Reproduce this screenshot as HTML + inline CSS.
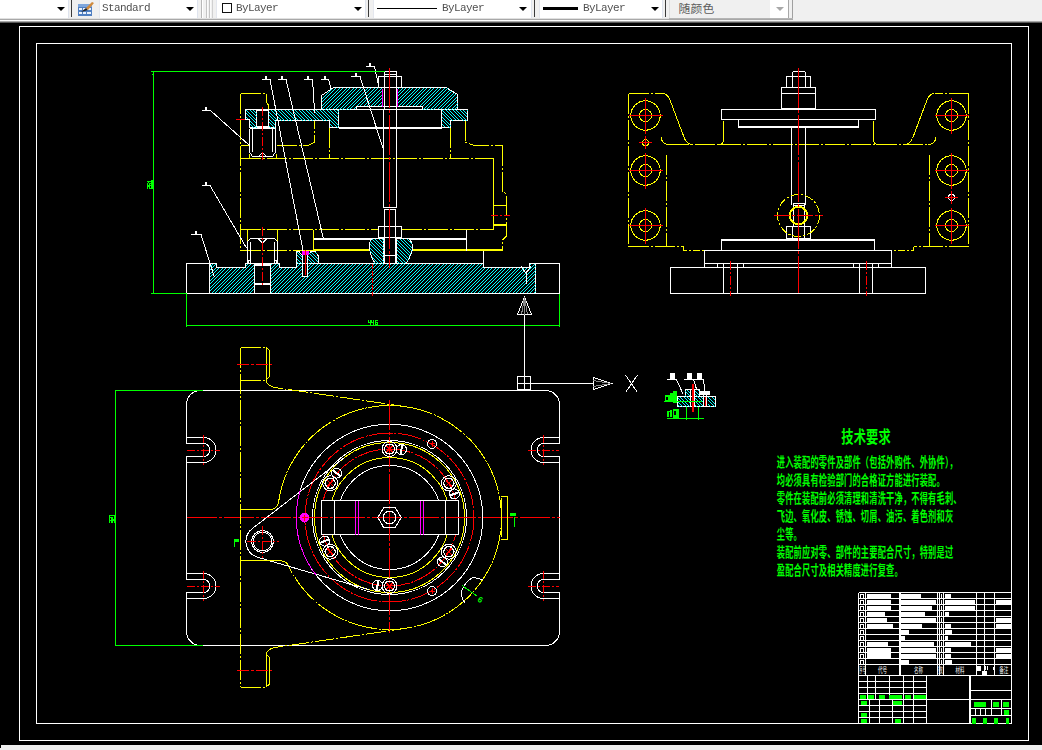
<!DOCTYPE html>
<html><head><meta charset="utf-8"><title>AutoCAD</title>
<style>
html,body{margin:0;padding:0;background:#000;overflow:hidden;}
body{width:1042px;height:750px;position:relative;font-family:"Liberation Sans",sans-serif;}
#cad{position:absolute;left:0;top:0;width:1042px;height:750px;display:block;}

#tb{position:absolute;left:0;top:0;width:1042px;height:23px;background:#f0f0f0;overflow:hidden;}
#tb .g{position:absolute;left:0;top:21px;width:1042px;height:1px;background:#a8a8a8;}
#tb .g2{position:absolute;left:0;top:22px;width:1042px;height:1px;background:#585858;}
#tb .w{position:absolute;top:0;height:18px;background:#fff;}
#tb .ln{position:absolute;top:18px;height:1px;left:0;width:793px;background:#e0e0e0;}
#tb .ln2{position:absolute;top:19px;height:1px;left:0;width:793px;background:#a8a8a8;}
#tb .ln3{position:absolute;top:20px;height:1px;left:0;width:793px;background:#fdfdfd;}
#tb .sep{position:absolute;top:0;height:17px;width:1px;background:#3a3a3a;}
#tb .vl{position:absolute;top:0;height:19px;width:1px;}
#tb .ar{position:absolute;top:7px;width:0;height:0;border-left:4px solid transparent;border-right:4px solid transparent;border-top:4px solid #000;}
#tb .t{position:absolute;top:2px;font-family:"Liberation Mono",monospace;font-size:11px;line-height:13px;letter-spacing:-0.6px;color:#505050;white-space:pre;will-change:transform;}
#bot{position:absolute;left:0;top:745px;width:1042px;height:5px;background:#f0f0f0;}
#bot i{position:absolute;left:0;top:0;width:1px;height:3px;background:#000;}

</style></head><body>
<svg id="cad" width="1042" height="750" viewBox="0 0 1042 750" shape-rendering="crispEdges">
<defs>
<pattern id="hf" patternUnits="userSpaceOnUse" width="7" height="7"><path d="M0 0h1v1h-1zM3 0h1v1h-1zM2 1h1v1h-1zM6 1h1v1h-1zM1 2h1v1h-1zM5 2h1v1h-1zM0 3h1v1h-1zM4 3h1v1h-1zM3 4h1v1h-1zM6 4h1v1h-1zM2 5h1v1h-1zM5 5h1v1h-1zM1 6h1v1h-1zM4 6h1v1h-1z" fill="#00ffff"/></pattern>
<pattern id="hb" patternUnits="userSpaceOnUse" width="7" height="7"><path d="M0 0h1v1h-1zM3 0h1v1h-1zM1 1h1v1h-1zM4 1h1v1h-1zM2 2h1v1h-1zM5 2h1v1h-1zM3 3h1v1h-1zM6 3h1v1h-1zM0 4h1v1h-1zM4 4h1v1h-1zM1 5h1v1h-1zM5 5h1v1h-1zM2 6h1v1h-1zM6 6h1v1h-1z" fill="#00ffff"/></pattern>
</defs>
<rect x="0" y="0" width="1042" height="750" fill="#000"/>
<rect x="19.5" y="26.5" width="1009" height="714" fill="none" stroke="#ffffff" stroke-width="1"/>
<rect x="36.5" y="43.5" width="975" height="680" fill="none" stroke="#ffffff" stroke-width="1"/>
<line x1="240.5" y1="93.5" x2="240.5" y2="250.5" stroke="#ffff00" stroke-width="1" stroke-dasharray="20 2 2 2"/>
<line x1="240.5" y1="93.5" x2="266.5" y2="93.5" stroke="#ffff00" stroke-width="1" stroke-dasharray="20 2 2 2"/>
<polyline points="266.5,93.5 266.5,102.5 268.5,105 268.5,109.5" fill="none" stroke="#ffff00" stroke-width="1"/>
<line x1="240.5" y1="145.5" x2="249.5" y2="145.5" stroke="#ffff00" stroke-width="1"/>
<polyline points="276.5,145.5 307.5,145.5 314.5,142.5 314.5,120.5" fill="none" stroke="#ffff00" stroke-width="1" stroke-dasharray="20 2 2 2"/>
<line x1="240.5" y1="158.5" x2="493.5" y2="158.5" stroke="#ffff00" stroke-width="1" stroke-dasharray="20 2 2 2"/>
<line x1="249.5" y1="154" x2="249.5" y2="158.5" stroke="#ffff00" stroke-width="1"/>
<line x1="276.5" y1="154" x2="276.5" y2="158.5" stroke="#ffff00" stroke-width="1"/>
<line x1="329.5" y1="127.5" x2="329.5" y2="158.5" stroke="#ffff00" stroke-width="1" stroke-dasharray="20 2 2 2"/>
<line x1="450.5" y1="127.5" x2="450.5" y2="158.5" stroke="#ffff00" stroke-width="1" stroke-dasharray="20 2 2 2"/>
<polyline points="465.5,120.5 465.5,142.5 475,145.5 502.5,145.5" fill="none" stroke="#ffff00" stroke-width="1" stroke-dasharray="20 2 2 2"/>
<polyline points="502.5,145.5 502.5,191 506.5,194.5 506.5,236 502.5,240 502.5,250.5" fill="none" stroke="#ffff00" stroke-width="1" stroke-dasharray="20 2 2 2"/>
<line x1="493.5" y1="158.5" x2="493.5" y2="229.5" stroke="#ffff00" stroke-width="1"/>
<line x1="240.5" y1="229.5" x2="378.5" y2="229.5" stroke="#ffff00" stroke-width="1" stroke-dasharray="20 2 2 2"/>
<line x1="401.5" y1="229.5" x2="493.5" y2="229.5" stroke="#ffff00" stroke-width="1" stroke-dasharray="20 2 2 2"/>
<line x1="240.5" y1="250.5" x2="313.5" y2="250.5" stroke="#ffff00" stroke-width="1" stroke-dasharray="20 2 2 2"/>
<line x1="313.5" y1="250" x2="370" y2="250" stroke="#ffff00" stroke-width="2"/>
<line x1="412" y1="250" x2="502.5" y2="250" stroke="#ffff00" stroke-width="2"/>
<line x1="247.5" y1="229.5" x2="247.5" y2="240.5" stroke="#ffff00" stroke-width="1"/>
<line x1="277.5" y1="229.5" x2="277.5" y2="240.5" stroke="#ffff00" stroke-width="1"/>
<line x1="313.5" y1="229.5" x2="313.5" y2="250.5" stroke="#ffff00" stroke-width="1"/>
<line x1="493.5" y1="205.5" x2="506.5" y2="205.5" stroke="#ffff00" stroke-width="1"/>
<line x1="493.5" y1="224.5" x2="506.5" y2="224.5" stroke="#ffff00" stroke-width="2"/>
<line x1="491" y1="215.5" x2="510" y2="215.5" stroke="#ff0000" stroke-width="1" stroke-dasharray="7 2 2 2"/>
<line x1="236" y1="119.5" x2="245.5" y2="119.5" stroke="#ff0000" stroke-width="1"/>
<rect x="186.5" y="263.5" width="23" height="30" fill="none" stroke="#ffffff" stroke-width="1"/>
<rect x="535.5" y="263.5" width="24" height="30" fill="none" stroke="#ffffff" stroke-width="1"/>
<polygon points="209.5,293.5 209.5,263.5 216,263.5 216,267.5 245.5,267.5 245.5,263.5 279.5,263.5 279.5,267.5 296.5,267.5 296.5,263.5 483.5,263.5 483.5,267.5 529.5,267.5 529.5,263.5 535.5,263.5 535.5,293.5" fill="none" stroke="#ffffff" stroke-width="1"/>
<path d="M209.5 293.5 L209.5 263.5 L216 263.5 L216 267.5 L245.5 267.5 L245.5 263.5 L279.5 263.5 L279.5 267.5 L296.5 267.5 L296.5 263.5 L483.5 263.5 L483.5 267.5 L529.5 267.5 L529.5 263.5 L535.5 263.5 L535.5 293.5Z M254.5 263.5 L270.5 263.5 L270.5 293.5 L254.5 293.5Z M302.5 263.5 L308 263.5 L308 276.5 L302.5 276.5Z" fill="url(#hf)" fill-rule="evenodd" stroke="none"/>
<polygon points="209.5,293.5 209.5,263.5 216,263.5 216,267.5 245.5,267.5 245.5,263.5 279.5,263.5 279.5,267.5 296.5,267.5 296.5,263.5 483.5,263.5 483.5,267.5 529.5,267.5 529.5,263.5 535.5,263.5 535.5,293.5" fill="none" stroke="#ffffff" stroke-width="1" stroke-dasharray="1 2"/>
<polygon points="296.5,263.5 296.5,251.5 299,251.5 301,254 309,254 311,251.5 315,251.5 318,255.5 318,263.5" fill="none" stroke="#ffffff" stroke-width="1"/>
<path d="M296.5 263.5 L296.5 251.5 L299 251.5 L301 254 L309 254 L311 251.5 L315 251.5 L318 255.5 L318 263.5Z M302.5 254 L308 254 L308 263.5 L302.5 263.5Z" fill="url(#hb)" fill-rule="evenodd" stroke="none"/>
<polygon points="296.5,263.5 296.5,251.5 299,251.5 301,254 309,254 311,251.5 315,251.5 318,255.5 318,263.5" fill="none" stroke="#ffffff" stroke-width="1" stroke-dasharray="1 2"/>
<line x1="254.5" y1="263.5" x2="254.5" y2="293.5" stroke="#ffffff" stroke-width="1"/>
<line x1="270.5" y1="263.5" x2="270.5" y2="293.5" stroke="#ffffff" stroke-width="1"/>
<line x1="254.5" y1="264.5" x2="270.5" y2="264.5" stroke="#ffffff" stroke-width="2"/>
<line x1="254.5" y1="284" x2="270.5" y2="284" stroke="#ffffff" stroke-width="2"/>
<line x1="186.5" y1="293.5" x2="559.5" y2="293.5" stroke="#ffffff" stroke-width="1"/>
<rect x="302.5" y="254.5" width="5" height="22" fill="none" stroke="#ffffff" stroke-width="1"/>
<rect x="301.5" y="251" width="7" height="4" fill="#ff00ff"/>
<line x1="305.5" y1="250" x2="305.5" y2="275" stroke="#ff0000" stroke-width="1"/>
<polyline points="521,266.5 526,273 531,266.5" fill="none" stroke="#ffffff" stroke-width="1"/>
<line x1="526" y1="273" x2="526" y2="284" stroke="#ffffff" stroke-width="1"/>
<line x1="483.5" y1="250.5" x2="483.5" y2="267.5" stroke="#ffffff" stroke-width="1"/>
<path d="M371.5 238.5 L383.5 238.5 L383.5 263.5 L375 263.5 Q369.5 254 369.5 247 Q369.5 242 371.5 238.5Z" fill="none" stroke="#ffffff" stroke-width="1"/>
<path d="M396.5 238.5 L409.5 238.5 Q412.5 243 412.5 247 Q412.5 254 406 263.5 L396.5 263.5Z" fill="none" stroke="#ffffff" stroke-width="1"/>
<path d="M371.5 238.5 L383.5 238.5 L383.5 263.5 L375 263.5 Q369.5 254 369.5 247 Q369.5 242 371.5 238.5Z" fill="url(#hb)" fill-rule="evenodd" stroke="none"/>
<path d="M396.5 238.5 L409.5 238.5 Q412.5 243 412.5 247 Q412.5 254 406 263.5 L396.5 263.5Z" fill="url(#hb)" fill-rule="evenodd" stroke="none"/>
<line x1="313.5" y1="239" x2="371" y2="239" stroke="#ffffff" stroke-width="2"/>
<line x1="410" y1="239" x2="466.5" y2="239" stroke="#ffffff" stroke-width="2"/>
<line x1="466.5" y1="229.5" x2="466.5" y2="250.5" stroke="#ffffff" stroke-width="1"/>
<polyline points="247.5,263.5 247.5,241.5 250.5,238.5 274.5,238.5 277.5,241.5 277.5,263.5" fill="none" stroke="#ffffff" stroke-width="1"/>
<line x1="250.5" y1="241.5" x2="250.5" y2="263" stroke="#ffffff" stroke-width="1"/>
<line x1="274.5" y1="241.5" x2="274.5" y2="263" stroke="#ffffff" stroke-width="1"/>
<polyline points="258,238.5 262.5,243 267,238.5" fill="none" stroke="#ffffff" stroke-width="1"/>
<circle cx="249.5" cy="262" r="1.5" fill="none" stroke="#ffffff" stroke-width="1"/>
<circle cx="275.5" cy="262" r="1.5" fill="none" stroke="#ffffff" stroke-width="1"/>
<line x1="262.5" y1="227" x2="262.5" y2="287" stroke="#ff0000" stroke-width="1" stroke-dasharray="9 2 2 2"/>
<polygon points="245.5,109.5 256.5,109.5 256.5,127.5 249.5,127.5 249.5,119.5 245.5,119.5" fill="none" stroke="#ffffff" stroke-width="1"/>
<path d="M245.5 109.5 L256.5 109.5 L256.5 127.5 L249.5 127.5 L249.5 119.5 L245.5 119.5Z" fill="url(#hb)" fill-rule="evenodd" stroke="none"/>
<polygon points="245.5,109.5 256.5,109.5 256.5,127.5 249.5,127.5 249.5,119.5 245.5,119.5" fill="none" stroke="#ffffff" stroke-width="1" stroke-dasharray="1 2"/>
<polygon points="268.5,109.5 338.5,109.5 338.5,127.5 329.5,127.5 329.5,120.5 275.5,120.5 275.5,127.5 268.5,127.5" fill="none" stroke="#ffffff" stroke-width="1"/>
<path d="M268.5 109.5 L338.5 109.5 L338.5 127.5 L329.5 127.5 L329.5 120.5 L275.5 120.5 L275.5 127.5 L268.5 127.5Z" fill="url(#hb)" fill-rule="evenodd" stroke="none"/>
<polygon points="268.5,109.5 338.5,109.5 338.5,127.5 329.5,127.5 329.5,120.5 275.5,120.5 275.5,127.5 268.5,127.5" fill="none" stroke="#ffffff" stroke-width="1" stroke-dasharray="1 2"/>
<polygon points="441.5,109.5 467.5,109.5 467.5,120.5 450.5,120.5 450.5,127.5 441.5,127.5" fill="none" stroke="#ffffff" stroke-width="1"/>
<path d="M441.5 109.5 L467.5 109.5 L467.5 120.5 L450.5 120.5 L450.5 127.5 L441.5 127.5Z" fill="url(#hb)" fill-rule="evenodd" stroke="none"/>
<polygon points="441.5,109.5 467.5,109.5 467.5,120.5 450.5,120.5 450.5,127.5 441.5,127.5" fill="none" stroke="#ffffff" stroke-width="1" stroke-dasharray="1 2"/>
<line x1="256.5" y1="110" x2="268.5" y2="110" stroke="#ffffff" stroke-width="2"/>
<line x1="256.5" y1="126.5" x2="268.5" y2="126.5" stroke="#ffffff" stroke-width="2"/>
<line x1="338.5" y1="109.5" x2="441.5" y2="109.5" stroke="#ffffff" stroke-width="1"/>
<line x1="338.5" y1="127.5" x2="441.5" y2="127.5" stroke="#ffffff" stroke-width="2"/>
<polyline points="249.5,128.5 249.5,152 252.5,156.5 272.5,156.5 275.5,152 275.5,128.5" fill="none" stroke="#ffffff" stroke-width="1"/>
<line x1="252.5" y1="129" x2="252.5" y2="152" stroke="#ffffff" stroke-width="1"/>
<line x1="272.5" y1="129" x2="272.5" y2="152" stroke="#ffffff" stroke-width="1"/>
<line x1="249.5" y1="128.5" x2="275.5" y2="128.5" stroke="#ffffff" stroke-width="1"/>
<polyline points="258.5,156.5 262.5,152.5 266.5,156.5" fill="none" stroke="#ffffff" stroke-width="1"/>
<line x1="262.5" y1="107" x2="262.5" y2="160" stroke="#ff0000" stroke-width="1" stroke-dasharray="9 2 2 2"/>
<polygon points="321.5,109.5 321.5,95.5 333.5,87.5 446,87.5 457.5,94.5 457.5,109.5 422.5,109.5 422.5,106.5 356.5,106.5 356.5,109.5" fill="none" stroke="#ffffff" stroke-width="1"/>
<path d="M321.5 109.5 L321.5 95.5 L333.5 87.5 L446 87.5 L457.5 94.5 L457.5 109.5 L422.5 109.5 L422.5 106.5 L356.5 106.5 L356.5 109.5Z M383 87.5 L398 87.5 L398 106.5 L383 106.5Z" fill="url(#hf)" fill-rule="evenodd" stroke="none"/>
<polygon points="321.5,109.5 321.5,95.5 333.5,87.5 446,87.5 457.5,94.5 457.5,109.5 422.5,109.5 422.5,106.5 356.5,106.5 356.5,109.5" fill="none" stroke="#ffffff" stroke-width="1" stroke-dasharray="1 2"/>
<line x1="356.5" y1="106.5" x2="422.5" y2="106.5" stroke="#ffffff" stroke-width="1"/>
<line x1="382.5" y1="88.5" x2="382.5" y2="106.5" stroke="#ff00ff" stroke-width="1"/>
<line x1="397.5" y1="88.5" x2="397.5" y2="106.5" stroke="#ff00ff" stroke-width="1"/>
<line x1="384.5" y1="71.5" x2="384.5" y2="109.5" stroke="#ffffff" stroke-width="1"/>
<line x1="383.5" y1="109.5" x2="383.5" y2="207.5" stroke="#ffffff" stroke-width="1"/>
<line x1="396.5" y1="71.5" x2="396.5" y2="207.5" stroke="#ffffff" stroke-width="1"/>
<line x1="384.5" y1="71.5" x2="396.5" y2="71.5" stroke="#ffffff" stroke-width="1"/>
<line x1="384.5" y1="74.5" x2="396.5" y2="74.5" stroke="#ffffff" stroke-width="1"/>
<line x1="383.5" y1="207.5" x2="397" y2="207.5" stroke="#ffffff" stroke-width="1"/>
<line x1="384.5" y1="209" x2="384.5" y2="263.5" stroke="#ffffff" stroke-width="1"/>
<line x1="395.5" y1="209" x2="395.5" y2="263.5" stroke="#ffffff" stroke-width="1"/>
<line x1="384.5" y1="209" x2="395.5" y2="209" stroke="#ffffff" stroke-width="1"/>
<line x1="384.5" y1="255.5" x2="395.5" y2="255.5" stroke="#ffffff" stroke-width="1"/>
<rect x="378.5" y="226.5" width="23" height="11" fill="none" stroke="#ffffff" stroke-width="1"/>
<line x1="384.5" y1="226.5" x2="384.5" y2="237.5" stroke="#ffffff" stroke-width="1"/>
<line x1="395.5" y1="226.5" x2="395.5" y2="237.5" stroke="#ffffff" stroke-width="1"/>
<rect x="378.5" y="76.5" width="23" height="11" fill="none" stroke="#ffffff" stroke-width="1"/>
<line x1="389.5" y1="68" x2="389.5" y2="268" stroke="#ff0000" stroke-width="1" stroke-dasharray="40 2 3 2"/>
<line x1="372.5" y1="263.5" x2="372.5" y2="296" stroke="#ff0000" stroke-width="1" stroke-dasharray="5 2"/>
<line x1="262" y1="79.5" x2="270" y2="79.5" stroke="#ffffff" stroke-width="1"/>
<line x1="270" y1="79.5" x2="303" y2="250.5" stroke="#ffffff" stroke-width="1"/>
<rect x="265" y="75.5" width="2" height="3.5" fill="#ffffff"/>
<line x1="278" y1="79.5" x2="286" y2="79.5" stroke="#ffffff" stroke-width="1"/>
<line x1="286" y1="79.5" x2="323.5" y2="239" stroke="#ffffff" stroke-width="1"/>
<rect x="281" y="75.5" width="2" height="3.5" fill="#ffffff"/>
<line x1="304" y1="79.5" x2="312.5" y2="79.5" stroke="#ffffff" stroke-width="1"/>
<line x1="312.5" y1="79.5" x2="314.7" y2="113" stroke="#ffffff" stroke-width="1"/>
<rect x="307.25" y="75.5" width="2" height="3.5" fill="#ffffff"/>
<line x1="320.5" y1="79.5" x2="328.5" y2="79.5" stroke="#ffffff" stroke-width="1"/>
<line x1="328.5" y1="79.5" x2="331" y2="88.5" stroke="#ffffff" stroke-width="1"/>
<rect x="323.5" y="75.5" width="2" height="3.5" fill="#ffffff"/>
<line x1="351" y1="76.5" x2="360" y2="76.5" stroke="#ffffff" stroke-width="1"/>
<line x1="360" y1="76.5" x2="382.7" y2="147.5" stroke="#ffffff" stroke-width="1"/>
<rect x="354.5" y="72.5" width="2" height="3.5" fill="#ffffff"/>
<line x1="366" y1="66.5" x2="374.5" y2="66.5" stroke="#ffffff" stroke-width="1"/>
<line x1="374.5" y1="66.5" x2="378.5" y2="85.5" stroke="#ffffff" stroke-width="1"/>
<rect x="369.25" y="62.5" width="2" height="3.5" fill="#ffffff"/>
<line x1="202" y1="110.5" x2="210.5" y2="110.5" stroke="#ffffff" stroke-width="1"/>
<line x1="210.5" y1="110.5" x2="249.5" y2="145.5" stroke="#ffffff" stroke-width="1"/>
<rect x="205.25" y="106.5" width="2" height="3.5" fill="#ffffff"/>
<line x1="202" y1="185.5" x2="210" y2="185.5" stroke="#ffffff" stroke-width="1"/>
<line x1="210" y1="185.5" x2="246.5" y2="248" stroke="#ffffff" stroke-width="1"/>
<rect x="205" y="181.5" width="2" height="3.5" fill="#ffffff"/>
<line x1="191" y1="234.5" x2="201" y2="234.5" stroke="#ffffff" stroke-width="1"/>
<line x1="201" y1="234.5" x2="214.5" y2="277.5" stroke="#ffffff" stroke-width="1"/>
<rect x="195" y="230.5" width="2" height="3.5" fill="#ffffff"/>
<line x1="151" y1="71.5" x2="384.5" y2="71.5" stroke="#00ff00" stroke-width="1"/>
<rect x="152" y="74" width="1" height="1" fill="#00ff00"/>
<line x1="153.5" y1="71.5" x2="153.5" y2="293.5" stroke="#00ff00" stroke-width="1"/>
<line x1="151" y1="293.5" x2="186.5" y2="293.5" stroke="#00ff00" stroke-width="1"/>
<line x1="186.5" y1="293.5" x2="186.5" y2="327" stroke="#00ff00" stroke-width="1"/>
<line x1="559.5" y1="293.5" x2="559.5" y2="327" stroke="#00ff00" stroke-width="1"/>
<line x1="186.5" y1="325.5" x2="559.5" y2="325.5" stroke="#00ff00" stroke-width="1"/>
<path d="M146.5 187.5h1.2v1h-1.2zM146.5 186.5h1.2v1h-1.2zM146.5 185.5h1.2v1h-1.2zM147.7 185.5h1.2v1h-1.2zM148.9 187.5h1.2v1h-1.2zM148.9 186.5h1.2v1h-1.2zM148.9 185.5h1.2v1h-1.2zM150.1 187.5h1.2v1h-1.2zM151.3 187.5h1.2v1h-1.2zM151.3 186.5h1.2v1h-1.2zM151.3 185.5h1.2v1h-1.2zM146.5 184.5h1.2v1h-1.2zM146.5 183.5h1.2v1h-1.2zM146.5 182.5h1.2v1h-1.2zM147.7 184.5h1.2v1h-1.2zM148.9 184.5h1.2v1h-1.2zM148.9 183.5h1.2v1h-1.2zM148.9 182.5h1.2v1h-1.2zM150.1 184.5h1.2v1h-1.2zM150.1 182.5h1.2v1h-1.2zM151.3 184.5h1.2v1h-1.2zM151.3 183.5h1.2v1h-1.2zM151.3 182.5h1.2v1h-1.2zM146.5 180.5h1.2v1h-1.2zM147.7 181.5h1.2v1h-1.2zM147.7 180.5h1.2v1h-1.2zM148.9 180.5h1.2v1h-1.2zM150.1 180.5h1.2v1h-1.2zM151.3 181.5h1.2v1h-1.2zM151.3 180.5h1.2v1h-1.2zM151.3 179.5h1.2v1h-1.2z" fill="#00ff00"/>
<path d="M368 319.5h1v1.2h-1zM370 319.5h1v1.2h-1zM368 320.7h1v1.2h-1zM370 320.7h1v1.2h-1zM368 321.9h1v1.2h-1zM369 321.9h1v1.2h-1zM370 321.9h1v1.2h-1zM370 323.1h1v1.2h-1zM370 324.3h1v1.2h-1zM371.3 319.5h1v1.2h-1zM373.3 319.5h1v1.2h-1zM371.3 320.7h1v1.2h-1zM373.3 320.7h1v1.2h-1zM371.3 321.9h1v1.2h-1zM372.3 321.9h1v1.2h-1zM373.3 321.9h1v1.2h-1zM373.3 323.1h1v1.2h-1zM373.3 324.3h1v1.2h-1zM374.6 319.5h1v1.2h-1zM375.6 319.5h1v1.2h-1zM376.6 319.5h1v1.2h-1zM374.6 320.7h1v1.2h-1zM374.6 321.9h1v1.2h-1zM375.6 321.9h1v1.2h-1zM376.6 321.9h1v1.2h-1zM374.6 323.1h1v1.2h-1zM376.6 323.1h1v1.2h-1zM374.6 324.3h1v1.2h-1zM375.6 324.3h1v1.2h-1zM376.6 324.3h1v1.2h-1z" fill="#00ff00"/>
<line x1="628.5" y1="93.5" x2="628.5" y2="246.5" stroke="#ffff00" stroke-width="1" stroke-dasharray="20 2 2 2"/>
<line x1="628.5" y1="93.5" x2="662.5" y2="93.5" stroke="#ffff00" stroke-width="1" stroke-dasharray="20 2 2 2"/>
<path d="M662.5 93.5 Q668 94 670 100 L684.5 138.5 Q687 144.5 693 144.5" fill="none" stroke="#ffff00" stroke-width="1"/>
<path d="M661 137 Q662 144.5 669 144.5" fill="none" stroke="#ffff00" stroke-width="1"/>
<path d="M719 144.5 Q723.5 144 723.5 139.5 L723.5 120.5" fill="none" stroke="#ffff00" stroke-width="1"/>
<line x1="666.5" y1="155" x2="666.5" y2="246.5" stroke="#ffff00" stroke-width="1" stroke-dasharray="20 2 2 2"/>
<polyline points="628.5,246.5 683.5,246.5" fill="none" stroke="#ffff00" stroke-width="1" stroke-dasharray="20 2 2 2"/>
<polyline points="683.5,246.5 683.5,250.5 704.5,250.5" fill="none" stroke="#ffff00" stroke-width="1" stroke-dasharray="7 2 2 2"/>
<circle cx="645.5" cy="115.5" r="14.7" fill="none" stroke="#ffff00" stroke-width="1"/>
<circle cx="645.5" cy="115.5" r="6" fill="none" stroke="#ffff00" stroke-width="1"/>
<line x1="628.5" y1="115.5" x2="662.5" y2="115.5" stroke="#ff0000" stroke-width="1"/>
<line x1="645.5" y1="97.5" x2="645.5" y2="133.5" stroke="#ff0000" stroke-width="1"/>
<circle cx="645.5" cy="170.5" r="14.7" fill="none" stroke="#ffff00" stroke-width="1"/>
<circle cx="645.5" cy="170.5" r="6" fill="none" stroke="#ffff00" stroke-width="1"/>
<line x1="628.5" y1="170.5" x2="662.5" y2="170.5" stroke="#ff0000" stroke-width="1"/>
<line x1="645.5" y1="152.5" x2="645.5" y2="188.5" stroke="#ff0000" stroke-width="1"/>
<circle cx="645.5" cy="225.5" r="14.7" fill="none" stroke="#ffff00" stroke-width="1"/>
<circle cx="645.5" cy="225.5" r="6" fill="none" stroke="#ffff00" stroke-width="1"/>
<line x1="628.5" y1="225.5" x2="662.5" y2="225.5" stroke="#ff0000" stroke-width="1"/>
<line x1="645.5" y1="207.5" x2="645.5" y2="243.5" stroke="#ff0000" stroke-width="1"/>
<line x1="968.5" y1="93.5" x2="968.5" y2="246.5" stroke="#ffff00" stroke-width="1" stroke-dasharray="20 2 2 2"/>
<line x1="968.5" y1="93.5" x2="934.5" y2="93.5" stroke="#ffff00" stroke-width="1" stroke-dasharray="20 2 2 2"/>
<path d="M934.5 93.5 Q929 94 927 100 L912.5 138.5 Q910 144.5 904 144.5" fill="none" stroke="#ffff00" stroke-width="1"/>
<path d="M936 137 Q935 144.5 928 144.5" fill="none" stroke="#ffff00" stroke-width="1"/>
<path d="M878 144.5 Q873.5 144 873.5 139.5 L873.5 120.5" fill="none" stroke="#ffff00" stroke-width="1"/>
<line x1="929.5" y1="155" x2="929.5" y2="246.5" stroke="#ffff00" stroke-width="1" stroke-dasharray="20 2 2 2"/>
<polyline points="968.5,246.5 913.5,246.5" fill="none" stroke="#ffff00" stroke-width="1" stroke-dasharray="20 2 2 2"/>
<polyline points="913.5,246.5 913.5,250.5 892.5,250.5" fill="none" stroke="#ffff00" stroke-width="1" stroke-dasharray="7 2 2 2"/>
<circle cx="951.5" cy="115.5" r="14.7" fill="none" stroke="#ffff00" stroke-width="1"/>
<circle cx="951.5" cy="115.5" r="6" fill="none" stroke="#ffff00" stroke-width="1"/>
<line x1="934.5" y1="115.5" x2="968.5" y2="115.5" stroke="#ff0000" stroke-width="1"/>
<line x1="951.5" y1="97.5" x2="951.5" y2="133.5" stroke="#ff0000" stroke-width="1"/>
<circle cx="951.5" cy="170.5" r="14.7" fill="none" stroke="#ffff00" stroke-width="1"/>
<circle cx="951.5" cy="170.5" r="6" fill="none" stroke="#ffff00" stroke-width="1"/>
<line x1="934.5" y1="170.5" x2="968.5" y2="170.5" stroke="#ff0000" stroke-width="1"/>
<line x1="951.5" y1="152.5" x2="951.5" y2="188.5" stroke="#ff0000" stroke-width="1"/>
<circle cx="951.5" cy="225.5" r="14.7" fill="none" stroke="#ffff00" stroke-width="1"/>
<circle cx="951.5" cy="225.5" r="6" fill="none" stroke="#ffff00" stroke-width="1"/>
<line x1="934.5" y1="225.5" x2="968.5" y2="225.5" stroke="#ff0000" stroke-width="1"/>
<line x1="951.5" y1="207.5" x2="951.5" y2="243.5" stroke="#ff0000" stroke-width="1"/>
<line x1="669" y1="144.5" x2="928" y2="144.5" stroke="#ffff00" stroke-width="1" stroke-dasharray="20 2 2 2"/>
<circle cx="645.5" cy="142.8" r="3" fill="none" stroke="#ffff00" stroke-width="1"/>
<line x1="639" y1="142.8" x2="652" y2="142.8" stroke="#ff0000" stroke-width="1"/>
<line x1="645.5" y1="136.3" x2="645.5" y2="149.3" stroke="#ff0000" stroke-width="1"/>
<circle cx="951.5" cy="197.2" r="3" fill="none" stroke="#ffffff" stroke-width="1"/>
<line x1="945" y1="197.2" x2="958" y2="197.2" stroke="#ff0000" stroke-width="1"/>
<line x1="951.5" y1="190.7" x2="951.5" y2="203.7" stroke="#ff0000" stroke-width="1"/>
<path d="M792.5 76.5 L792.5 73.5 Q792.5 71.5 794.5 71.5 L803.5 71.5 Q805.5 71.5 805.5 73.5 L805.5 76.5" fill="none" stroke="#ffffff" stroke-width="1"/>
<rect x="786.5" y="76.5" width="24" height="11" fill="none" stroke="#ffffff" stroke-width="1"/>
<line x1="792.5" y1="73" x2="792.5" y2="87.5" stroke="#ffffff" stroke-width="1"/>
<line x1="805.5" y1="73" x2="805.5" y2="87.5" stroke="#ffffff" stroke-width="1"/>
<rect x="781.5" y="87.5" width="34" height="21" fill="none" stroke="#ffffff" stroke-width="1"/>
<line x1="781.5" y1="93.5" x2="815.5" y2="93.5" stroke="#ffffff" stroke-width="1"/>
<rect x="721.5" y="109.5" width="154" height="10" fill="none" stroke="#ffffff" stroke-width="1"/>
<rect x="738.5" y="119.5" width="120" height="8" fill="none" stroke="#ffffff" stroke-width="1"/>
<line x1="738.5" y1="127" x2="858.5" y2="127" stroke="#ffffff" stroke-width="2"/>
<line x1="791.5" y1="127.5" x2="791.5" y2="204.5" stroke="#ffffff" stroke-width="1"/>
<line x1="805.5" y1="127.5" x2="805.5" y2="204.5" stroke="#ffffff" stroke-width="1"/>
<rect x="793.5" y="203.5" width="11" height="22.5" fill="none" stroke="#ffffff" stroke-width="1"/>
<line x1="793.5" y1="205.5" x2="804.5" y2="205.5" stroke="#ffffff" stroke-width="1"/>
<rect x="786.5" y="226.5" width="24" height="12" fill="none" stroke="#ffffff" stroke-width="1"/>
<line x1="792.5" y1="226.5" x2="792.5" y2="238.5" stroke="#ffffff" stroke-width="1"/>
<line x1="804.5" y1="226.5" x2="804.5" y2="238.5" stroke="#ffffff" stroke-width="1"/>
<circle cx="798.5" cy="215.5" r="21" fill="none" stroke="#ffff00" stroke-width="1" stroke-dasharray="9 2 2 2"/>
<circle cx="798.5" cy="215.5" r="8.7" fill="none" stroke="#ffff00" stroke-width="2"/>
<line x1="774" y1="215.5" x2="823" y2="215.5" stroke="#ff0000" stroke-width="1" stroke-dasharray="16 2 3 2"/>
<path d="M721.5 250.5 L721.5 240.5 Q721.5 239 723 239 L873 239 Q874.5 239 874.5 240.5 L874.5 250.5" fill="none" stroke="#ffffff" stroke-width="1"/>
<line x1="722" y1="239.5" x2="874" y2="239.5" stroke="#ffffff" stroke-width="2"/>
<rect x="704.5" y="250.5" width="187" height="13" fill="none" stroke="#ffffff" stroke-width="1"/>
<rect x="704.5" y="263.5" width="13" height="4" fill="none" stroke="#ffffff" stroke-width="1"/>
<rect x="878.5" y="263.5" width="13" height="4" fill="none" stroke="#ffffff" stroke-width="1"/>
<rect x="670.5" y="267.5" width="255" height="26" fill="none" stroke="#ffffff" stroke-width="1"/>
<line x1="723.5" y1="263.5" x2="723.5" y2="293.5" stroke="#ffffff" stroke-width="1"/>
<line x1="737.5" y1="263.5" x2="737.5" y2="293.5" stroke="#ffffff" stroke-width="1"/>
<line x1="859.5" y1="263.5" x2="859.5" y2="293.5" stroke="#ffffff" stroke-width="1"/>
<line x1="872.5" y1="263.5" x2="872.5" y2="293.5" stroke="#ffffff" stroke-width="1"/>
<line x1="730.5" y1="261" x2="730.5" y2="296" stroke="#ff0000" stroke-width="1" stroke-dasharray="9 2 2 2"/>
<line x1="866.5" y1="261" x2="866.5" y2="296" stroke="#ff0000" stroke-width="1" stroke-dasharray="9 2 2 2"/>
<polyline points="743.5,263.5 743.5,267.5 853.5,267.5 853.5,263.5" fill="none" stroke="#ffffff" stroke-width="1"/>
<line x1="798.5" y1="67.5" x2="798.5" y2="293" stroke="#ff0000" stroke-width="1" stroke-dasharray="40 2 3 2"/>
<rect x="186.5" y="390.5" width="373" height="255" rx="14" ry="14" fill="none" stroke="#ffffff" stroke-width="1"/>
<path d="M186.5 437.5 L203.5 437.5 A12.5 12.5 0 0 1 203.5 462.5 L186.5 462.5" fill="none" stroke="#ffffff" stroke-width="1"/>
<path d="M186.5 443.5 L203.5 443.5 A6.5 6.5 0 0 1 203.5 456.5 L186.5 456.5" fill="none" stroke="#ffffff" stroke-width="1"/>
<line x1="186.5" y1="450" x2="219.5" y2="450" stroke="#ff0000" stroke-width="1" stroke-dasharray="8 2 2 2"/>
<line x1="203.5" y1="435" x2="203.5" y2="465" stroke="#ff0000" stroke-width="1" stroke-dasharray="8 2 2 2"/>
<line x1="186.5" y1="444" x2="186.5" y2="456" stroke="#000" stroke-width="1"/>
<path d="M186.5 573.5 L203.5 573.5 A12.5 12.5 0 0 1 203.5 598.5 L186.5 598.5" fill="none" stroke="#ffffff" stroke-width="1"/>
<path d="M186.5 579.5 L203.5 579.5 A6.5 6.5 0 0 1 203.5 592.5 L186.5 592.5" fill="none" stroke="#ffffff" stroke-width="1"/>
<line x1="186.5" y1="586" x2="219.5" y2="586" stroke="#ff0000" stroke-width="1" stroke-dasharray="8 2 2 2"/>
<line x1="203.5" y1="571" x2="203.5" y2="601" stroke="#ff0000" stroke-width="1" stroke-dasharray="8 2 2 2"/>
<line x1="186.5" y1="580" x2="186.5" y2="592" stroke="#000" stroke-width="1"/>
<path d="M559.5 437.5 L543.5 437.5 A12.5 12.5 0 0 0 543.5 462.5 L559.5 462.5" fill="none" stroke="#ffffff" stroke-width="1"/>
<path d="M559.5 443.5 L543.5 443.5 A6.5 6.5 0 0 0 543.5 456.5 L559.5 456.5" fill="none" stroke="#ffffff" stroke-width="1"/>
<line x1="527.5" y1="450" x2="559.5" y2="450" stroke="#ff0000" stroke-width="1" stroke-dasharray="8 2 2 2"/>
<line x1="543.5" y1="435" x2="543.5" y2="465" stroke="#ff0000" stroke-width="1" stroke-dasharray="8 2 2 2"/>
<line x1="559.5" y1="444" x2="559.5" y2="456" stroke="#000" stroke-width="1"/>
<path d="M559.5 573.5 L543.5 573.5 A12.5 12.5 0 0 0 543.5 598.5 L559.5 598.5" fill="none" stroke="#ffffff" stroke-width="1"/>
<path d="M559.5 579.5 L543.5 579.5 A6.5 6.5 0 0 0 543.5 592.5 L559.5 592.5" fill="none" stroke="#ffffff" stroke-width="1"/>
<line x1="527.5" y1="586" x2="559.5" y2="586" stroke="#ff0000" stroke-width="1" stroke-dasharray="8 2 2 2"/>
<line x1="543.5" y1="571" x2="543.5" y2="601" stroke="#ff0000" stroke-width="1" stroke-dasharray="8 2 2 2"/>
<line x1="559.5" y1="580" x2="559.5" y2="592" stroke="#000" stroke-width="1"/>
<path d="M278.46 502.88 A112 112 0 1 1 287.58 563.95" fill="none" stroke="#ffff00" stroke-width="1" stroke-dasharray="30 1.5 2 1.5"/>
<circle cx="389.5" cy="517.5" r="93.3" fill="none" stroke="#ffffff" stroke-width="1"/>
<circle cx="389.5" cy="517.5" r="84.5" fill="none" stroke="#ff0000" stroke-width="1" stroke-dasharray="24 1.5 2 1.5"/>
<circle cx="389.5" cy="517.5" r="77" fill="none" stroke="#ffffff" stroke-width="1"/>
<circle cx="389.5" cy="517.5" r="75" fill="none" stroke="#ffff00" stroke-width="1"/>
<circle cx="389.5" cy="517.5" r="68.5" fill="none" stroke="#ff0000" stroke-width="1" stroke-dasharray="24 1.5 2 1.5"/>
<circle cx="389.5" cy="517.5" r="60" fill="none" stroke="#ffff00" stroke-width="1"/>
<circle cx="389.5" cy="517.5" r="52" fill="none" stroke="#ffffff" stroke-width="1"/>
<rect x="321.5" y="500.5" width="137" height="34" fill="#000" stroke="#ffffff" stroke-width="1"/>
<line x1="186.5" y1="517.5" x2="559.5" y2="517.5" stroke="#ff0000" stroke-width="1" stroke-dasharray="30 2 3 2"/>
<line x1="389.5" y1="400" x2="389.5" y2="633" stroke="#ff0000" stroke-width="1" stroke-dasharray="30 2 3 2"/>
<line x1="334.5" y1="500.5" x2="334.5" y2="534.5" stroke="#ffffff" stroke-width="1"/>
<line x1="445.5" y1="500.5" x2="445.5" y2="534.5" stroke="#ffffff" stroke-width="1"/>
<line x1="355.5" y1="500.5" x2="355.5" y2="534.5" stroke="#ff00ff" stroke-width="1"/>
<line x1="358.5" y1="500.5" x2="358.5" y2="534.5" stroke="#ff00ff" stroke-width="1"/>
<line x1="420.5" y1="500.5" x2="420.5" y2="534.5" stroke="#ff00ff" stroke-width="1"/>
<line x1="423.5" y1="500.5" x2="423.5" y2="534.5" stroke="#ff00ff" stroke-width="1"/>
<polygon points="401.1,517.5 395.3,527.55 383.7,527.55 377.9,517.5 383.7,507.45 395.3,507.45" fill="none" stroke="#ffffff" stroke-width="1"/>
<circle cx="389.5" cy="517.5" r="6.3" fill="none" stroke="#ffffff" stroke-width="1"/>
<circle cx="389.5" cy="449" r="7.5" fill="none" stroke="#ffffff" stroke-width="1"/>
<circle cx="389.5" cy="449" r="5" fill="none" stroke="#ffffff" stroke-width="1"/>
<polygon points="395,449 392.25,453.76 386.75,453.76 384,449 386.75,444.24 392.25,444.24" fill="none" stroke="#ffffff" stroke-width="1"/>
<line x1="386.5" y1="446" x2="392.5" y2="452" stroke="#ff0000" stroke-width="1"/>
<line x1="386.5" y1="452" x2="392.5" y2="446" stroke="#ff0000" stroke-width="1"/>
<circle cx="401.48" cy="449.55" r="5" fill="none" stroke="#ffffff" stroke-width="1"/>
<line x1="400.7" y1="453.98" x2="402.26" y2="445.12" stroke="#ffffff" stroke-width="2"/>
<circle cx="448.82" cy="483.25" r="7.5" fill="none" stroke="#ffffff" stroke-width="1"/>
<circle cx="448.82" cy="483.25" r="5" fill="none" stroke="#ffffff" stroke-width="1"/>
<polygon points="454.32,483.25 451.57,488.01 446.07,488.01 443.32,483.25 446.07,478.49 451.57,478.49" fill="none" stroke="#ffffff" stroke-width="1"/>
<line x1="445.82" y1="480.25" x2="451.82" y2="486.25" stroke="#ff0000" stroke-width="1"/>
<line x1="445.82" y1="486.25" x2="451.82" y2="480.25" stroke="#ff0000" stroke-width="1"/>
<circle cx="454.34" cy="493.9" r="5" fill="none" stroke="#ffffff" stroke-width="1"/>
<line x1="450.11" y1="495.44" x2="458.57" y2="492.36" stroke="#ffffff" stroke-width="2"/>
<circle cx="448.82" cy="551.75" r="7.5" fill="none" stroke="#ffffff" stroke-width="1"/>
<circle cx="448.82" cy="551.75" r="5" fill="none" stroke="#ffffff" stroke-width="1"/>
<polygon points="454.32,551.75 451.57,556.51 446.07,556.51 443.32,551.75 446.07,546.99 451.57,546.99" fill="none" stroke="#ffffff" stroke-width="1"/>
<line x1="445.82" y1="548.75" x2="451.82" y2="554.75" stroke="#ff0000" stroke-width="1"/>
<line x1="445.82" y1="554.75" x2="451.82" y2="548.75" stroke="#ff0000" stroke-width="1"/>
<circle cx="442.36" cy="561.85" r="5" fill="none" stroke="#ffffff" stroke-width="1"/>
<line x1="438.91" y1="558.96" x2="445.8" y2="564.74" stroke="#ffffff" stroke-width="2"/>
<circle cx="389.5" cy="586" r="7.5" fill="none" stroke="#ffffff" stroke-width="1"/>
<circle cx="389.5" cy="586" r="5" fill="none" stroke="#ffffff" stroke-width="1"/>
<polygon points="395,586 392.25,590.76 386.75,590.76 384,586 386.75,581.24 392.25,581.24" fill="none" stroke="#ffffff" stroke-width="1"/>
<line x1="386.5" y1="583" x2="392.5" y2="589" stroke="#ff0000" stroke-width="1"/>
<line x1="386.5" y1="589" x2="392.5" y2="583" stroke="#ff0000" stroke-width="1"/>
<circle cx="377.52" cy="585.45" r="5" fill="none" stroke="#ffffff" stroke-width="1"/>
<line x1="378.3" y1="581.02" x2="376.74" y2="589.88" stroke="#ffffff" stroke-width="2"/>
<circle cx="330.18" cy="551.75" r="7.5" fill="none" stroke="#ffffff" stroke-width="1"/>
<circle cx="330.18" cy="551.75" r="5" fill="none" stroke="#ffffff" stroke-width="1"/>
<polygon points="335.68,551.75 332.93,556.51 327.43,556.51 324.68,551.75 327.43,546.99 332.93,546.99" fill="none" stroke="#ffffff" stroke-width="1"/>
<line x1="327.18" y1="548.75" x2="333.18" y2="554.75" stroke="#ff0000" stroke-width="1"/>
<line x1="327.18" y1="554.75" x2="333.18" y2="548.75" stroke="#ff0000" stroke-width="1"/>
<circle cx="324.66" cy="541.1" r="5" fill="none" stroke="#ffffff" stroke-width="1"/>
<line x1="328.89" y1="539.56" x2="320.43" y2="542.64" stroke="#ffffff" stroke-width="2"/>
<circle cx="330.18" cy="483.25" r="7.5" fill="none" stroke="#ffffff" stroke-width="1"/>
<circle cx="330.18" cy="483.25" r="5" fill="none" stroke="#ffffff" stroke-width="1"/>
<polygon points="335.68,483.25 332.93,488.01 327.43,488.01 324.68,483.25 327.43,478.49 332.93,478.49" fill="none" stroke="#ffffff" stroke-width="1"/>
<line x1="327.18" y1="480.25" x2="333.18" y2="486.25" stroke="#ff0000" stroke-width="1"/>
<line x1="327.18" y1="486.25" x2="333.18" y2="480.25" stroke="#ff0000" stroke-width="1"/>
<circle cx="336.64" cy="473.15" r="5" fill="none" stroke="#ffffff" stroke-width="1"/>
<line x1="340.09" y1="476.04" x2="333.2" y2="470.26" stroke="#ffffff" stroke-width="2"/>
<circle cx="432" cy="443.89" r="4.5" fill="none" stroke="#ffffff" stroke-width="1"/>
<line x1="429" y1="443.89" x2="435" y2="443.89" stroke="#ff0000" stroke-width="1"/>
<line x1="432" y1="440.89" x2="432" y2="446.89" stroke="#ff0000" stroke-width="1"/>
<circle cx="432" cy="591.11" r="4.5" fill="none" stroke="#ffffff" stroke-width="1"/>
<line x1="429" y1="591.11" x2="435" y2="591.11" stroke="#ff0000" stroke-width="1"/>
<line x1="432" y1="588.11" x2="432" y2="594.11" stroke="#ff0000" stroke-width="1"/>
<circle cx="304.5" cy="517.5" r="4.5" fill="#ff00ff" stroke="#ff00ff" stroke-width="1"/>
<line x1="301.5" y1="517.5" x2="307.5" y2="517.5" stroke="#ff0000" stroke-width="1"/>
<line x1="304.5" y1="514.5" x2="304.5" y2="520.5" stroke="#ff0000" stroke-width="1"/>
<circle cx="262.5" cy="541.5" r="10.9" fill="none" stroke="#ffffff" stroke-width="1"/>
<circle cx="262.5" cy="541.5" r="9.3" fill="none" stroke="#ffffff" stroke-width="1"/>
<line x1="246.5" y1="541.5" x2="278.5" y2="541.5" stroke="#ff0000" stroke-width="1" stroke-dasharray="9 2 2 2"/>
<line x1="262.5" y1="525.5" x2="262.5" y2="557.5" stroke="#ff0000" stroke-width="1" stroke-dasharray="9 2 2 2"/>
<line x1="257.89" y1="557.34" x2="368.56" y2="589.52" stroke="#ffffff" stroke-width="1"/>
<line x1="252.43" y1="528.43" x2="343.73" y2="458.09" stroke="#ffffff" stroke-width="1"/>
<path d="M252.43 528.43 A16.5 16.5 0 0 0 257.89 557.34" fill="none" stroke="#ffffff" stroke-width="1"/>
<path d="M300.28 490.22 A93.3 93.3 0 0 0 315.98 574.94" fill="none" stroke="#ff00ff" stroke-width="1"/>
<line x1="240.5" y1="347.5" x2="240.5" y2="687" stroke="#ffff00" stroke-width="1" stroke-dasharray="20 2 2 2"/>
<polyline points="240.5,347.5 266,347.5" fill="none" stroke="#ffff00" stroke-width="1" stroke-dasharray="20 2 2 2"/>
<polyline points="266,347.5 269,350 269,377 266,380" fill="none" stroke="#ffff00" stroke-width="1"/>
<line x1="266" y1="347.5" x2="266" y2="380" stroke="#ffff00" stroke-width="1"/>
<line x1="240.5" y1="380" x2="266" y2="380" stroke="#ffff00" stroke-width="1" stroke-dasharray="20 2 2 2"/>
<line x1="237" y1="364.5" x2="272" y2="364.5" stroke="#ff0000" stroke-width="1" stroke-dasharray="12 2 3 2"/>
<polyline points="240.5,687 266,687" fill="none" stroke="#ffff00" stroke-width="1" stroke-dasharray="20 2 2 2"/>
<polyline points="266,687 269,684.5 269,657 266,654.5" fill="none" stroke="#ffff00" stroke-width="1"/>
<line x1="266.5" y1="654.5" x2="266.5" y2="687" stroke="#ffff00" stroke-width="1"/>
<line x1="237" y1="670.5" x2="272" y2="670.5" stroke="#ff0000" stroke-width="1" stroke-dasharray="12 2 3 2"/>
<path d="M266 380 Q267 386 275 387.5 L405.76 406.69" fill="none" stroke="#ffff00" stroke-width="1" stroke-dasharray="20 2 2 2"/>
<path d="M266 654.5 Q267 649 275 647.5 L405.76 628.31" fill="none" stroke="#ffff00" stroke-width="1" stroke-dasharray="20 2 2 2"/>
<path d="M240.5 509.5 L270 509.5 Q277 509 278.46 502.88" fill="none" stroke="#ffff00" stroke-width="1"/>
<path d="M240.5 560.5 L279 560.5 Q285.5 561 287.58 563.95" fill="none" stroke="#ffff00" stroke-width="1"/>
<polyline points="500.5,496 507,496 507,539 500.5,539" fill="none" stroke="#ffff00" stroke-width="1"/>
<line x1="501.5" y1="498" x2="501.5" y2="537" stroke="#ffff00" stroke-width="1"/>
<rect x="509.5" y="513" width="6" height="3" fill="#00ff00"/>
<line x1="514.5" y1="517" x2="514.5" y2="527" stroke="#00ff00" stroke-width="1"/>
<rect x="234" y="539" width="4.5" height="2.5" fill="#00ff00"/>
<line x1="234.5" y1="539" x2="234.5" y2="547" stroke="#00ff00" stroke-width="1"/>
<path d="M465 603 Q455 590 473 577 L483 580" fill="none" stroke="#ffffff" stroke-width="1"/>
<line x1="462" y1="585.5" x2="477" y2="596" stroke="#00ff00" stroke-width="1"/>
<text x="477" y="601" fill="#00ff00" font-family="Liberation Sans,sans-serif" font-size="8" font-weight="bold" transform="rotate(30 477 601)">6</text>
<line x1="114.5" y1="390.5" x2="203" y2="390.5" stroke="#00ff00" stroke-width="1"/>
<line x1="115.5" y1="390.5" x2="115.5" y2="645.5" stroke="#00ff00" stroke-width="1"/>
<line x1="114.5" y1="645.5" x2="203" y2="645.5" stroke="#00ff00" stroke-width="1"/>
<path d="M109 521.65h1.2v0.85h-1.2zM109 520.8h1.2v0.85h-1.2zM109 519.95h1.2v0.85h-1.2zM110.2 519.95h1.2v0.85h-1.2zM111.4 521.65h1.2v0.85h-1.2zM111.4 520.8h1.2v0.85h-1.2zM111.4 519.95h1.2v0.85h-1.2zM112.6 519.95h1.2v0.85h-1.2zM113.8 521.65h1.2v0.85h-1.2zM113.8 520.8h1.2v0.85h-1.2zM113.8 519.95h1.2v0.85h-1.2zM109 519.1h1.2v0.85h-1.2zM109 518.25h1.2v0.85h-1.2zM109 517.4h1.2v0.85h-1.2zM110.2 517.4h1.2v0.85h-1.2zM111.4 519.1h1.2v0.85h-1.2zM111.4 518.25h1.2v0.85h-1.2zM111.4 517.4h1.2v0.85h-1.2zM112.6 519.1h1.2v0.85h-1.2zM113.8 519.1h1.2v0.85h-1.2zM113.8 518.25h1.2v0.85h-1.2zM113.8 517.4h1.2v0.85h-1.2zM109 516.55h1.2v0.85h-1.2zM109 515.7h1.2v0.85h-1.2zM109 514.85h1.2v0.85h-1.2zM110.2 516.55h1.2v0.85h-1.2zM110.2 514.85h1.2v0.85h-1.2zM111.4 516.55h1.2v0.85h-1.2zM111.4 514.85h1.2v0.85h-1.2zM112.6 516.55h1.2v0.85h-1.2zM112.6 514.85h1.2v0.85h-1.2zM113.8 516.55h1.2v0.85h-1.2zM113.8 515.7h1.2v0.85h-1.2zM113.8 514.85h1.2v0.85h-1.2z" fill="#00ff00"/>
<rect x="517.5" y="376.5" width="13" height="13" fill="none" stroke="#ffffff" stroke-width="1"/>
<line x1="524.5" y1="376.5" x2="524.5" y2="389.5" stroke="#ffffff" stroke-width="1"/>
<line x1="517.5" y1="383.5" x2="530.5" y2="383.5" stroke="#ffffff" stroke-width="1"/>
<line x1="524.5" y1="314.5" x2="524.5" y2="376.5" stroke="#ffffff" stroke-width="1"/>
<polygon points="524.5,297 517.5,314.5 531.5,314.5" fill="none" stroke="#ffffff" stroke-width="1"/>
<line x1="524.5" y1="297" x2="521.5" y2="314.5" stroke="#888" stroke-width="1"/>
<line x1="524.5" y1="297" x2="527.5" y2="314.5" stroke="#888" stroke-width="1"/>
<line x1="524.5" y1="297" x2="524.5" y2="314.5" stroke="#888" stroke-width="1"/>
<line x1="530.5" y1="383.5" x2="593.5" y2="383.5" stroke="#ffffff" stroke-width="1"/>
<polygon points="611,383.5 593.5,377.5 593.5,389.5" fill="none" stroke="#ffffff" stroke-width="1"/>
<line x1="611" y1="383.5" x2="593.5" y2="380.5" stroke="#888" stroke-width="1"/>
<line x1="611" y1="383.5" x2="593.5" y2="386.5" stroke="#888" stroke-width="1"/>
<line x1="625.5" y1="375" x2="637.5" y2="392.5" stroke="#ffffff" stroke-width="1"/>
<line x1="637.5" y1="375" x2="625.5" y2="392.5" stroke="#ffffff" stroke-width="1"/>
<rect x="669.5" y="373" width="5" height="6.5" fill="#ffffff"/>
<line x1="667" y1="379.5" x2="676.5" y2="379.5" stroke="#ffffff" stroke-width="1"/>
<rect x="686.5" y="373" width="5" height="6.5" fill="#ffffff"/>
<line x1="684" y1="379.5" x2="693.5" y2="379.5" stroke="#ffffff" stroke-width="1"/>
<rect x="696.5" y="373" width="5" height="6.5" fill="#ffffff"/>
<line x1="694" y1="379.5" x2="703.5" y2="379.5" stroke="#ffffff" stroke-width="1"/>
<line x1="676.5" y1="379.5" x2="683" y2="394" stroke="#ffffff" stroke-width="1"/>
<line x1="693.5" y1="379.5" x2="696.5" y2="389" stroke="#ffffff" stroke-width="1"/>
<line x1="703.5" y1="379.5" x2="705" y2="392" stroke="#ffffff" stroke-width="1"/>
<polygon points="685,389.5 699,389.5 699,396.5 685,396.5" fill="none" stroke="#ffffff" stroke-width="1"/>
<polygon points="677.5,396.5 715,396.5 715,406.5 677.5,406.5" fill="none" stroke="#ffffff" stroke-width="1"/>
<path d="M685 389.5 L690 389.5 L690 396.5 L685 396.5Z M695 389.5 L699 389.5 L699 396.5 L695 396.5Z" fill="url(#hb)" fill-rule="evenodd" stroke="none"/>
<path d="M677.5 396.5 L690 396.5 L690 406.5 L677.5 406.5Z M695 396.5 L704 396.5 L704 406.5 L695 406.5Z M707.5 396.5 L715 396.5 L715 406.5 L707.5 406.5Z" fill="url(#hb)" fill-rule="evenodd" stroke="none"/>
<line x1="690.5" y1="390" x2="690.5" y2="406.5" stroke="#ffffff" stroke-width="1"/>
<line x1="694.5" y1="390" x2="694.5" y2="406.5" stroke="#ffffff" stroke-width="1"/>
<line x1="692.5" y1="384" x2="692.5" y2="412" stroke="#ff0000" stroke-width="2"/>
<rect x="698.5" y="391" width="11.5" height="1.5" fill="#ffffff"/>
<rect x="698.5" y="393" width="11.5" height="1.5" fill="#ffffff"/>
<rect x="703.5" y="394.5" width="3" height="12" fill="none" stroke="#ffffff" stroke-width="1"/>
<line x1="705" y1="397" x2="705" y2="406" stroke="#ff0000" stroke-width="1"/>
<rect x="664.5" y="395" width="5" height="6" fill="#00ff00"/>
<rect x="669.5" y="393" width="3" height="8.5" fill="#00ff00"/>
<rect x="672.5" y="391" width="4.5" height="11.5" fill="#00ff00"/>
<rect x="665.5" y="396.5" width="2" height="3" fill="#000"/>
<line x1="664" y1="401.5" x2="701.5" y2="401.5" stroke="#00ff00" stroke-width="1"/>
<rect x="667" y="410.5" width="2" height="6" fill="#00ff00"/>
<rect x="670" y="409.5" width="2" height="7" fill="#00ff00"/>
<rect x="673" y="408.5" width="6" height="9" fill="#00ff00"/>
<rect x="667" y="410.5" width="5" height="1.5" fill="#00ff00"/>
<rect x="674" y="411" width="2" height="3.5" fill="#000"/>
<line x1="667" y1="418.5" x2="704" y2="418.5" stroke="#00ff00" stroke-width="1"/>
<line x1="686.5" y1="406.5" x2="686.5" y2="420" stroke="#00ff00" stroke-width="1"/>
<line x1="698.5" y1="406.5" x2="698.5" y2="420" stroke="#00ff00" stroke-width="1"/>
<g transform="translate(841.3 428.2) scale(0.122 0.167)" fill="#00ff00" font-family="'Liberation Sans','Noto Sans CJK SC',sans-serif" font-weight="bold" font-size="100"><text x="0" y="88" letter-spacing="1.64">技术要求</text></g>
<g transform="translate(776.8 455.8) scale(0.082 0.132)" fill="#00ff00" font-family="'Liberation Sans','Noto Sans CJK SC',sans-serif" font-weight="bold" font-size="100"><text x="0" y="88" letter-spacing="2.68">进入装配的零件及部件（包括外购件、外协件），</text></g>
<g transform="translate(776.8 473.75) scale(0.082 0.132)" fill="#00ff00" font-family="'Liberation Sans','Noto Sans CJK SC',sans-serif" font-weight="bold" font-size="100"><text x="0" y="88" letter-spacing="2.68">均必须具有检验部门的合格证方能进行装配。</text></g>
<g transform="translate(776.8 491.7) scale(0.082 0.132)" fill="#00ff00" font-family="'Liberation Sans','Noto Sans CJK SC',sans-serif" font-weight="bold" font-size="100"><text x="0" y="88" letter-spacing="2.68">零件在装配前必须清理和清洗干净，不得有毛刺、</text></g>
<g transform="translate(776.8 509.65) scale(0.082 0.132)" fill="#00ff00" font-family="'Liberation Sans','Noto Sans CJK SC',sans-serif" font-weight="bold" font-size="100"><text x="0" y="88" letter-spacing="2.68">飞边、氧化皮、锈蚀、切屑、油污、着色剂和灰</text></g>
<g transform="translate(776.8 527.6) scale(0.082 0.132)" fill="#00ff00" font-family="'Liberation Sans','Noto Sans CJK SC',sans-serif" font-weight="bold" font-size="100"><text x="0" y="88" letter-spacing="2.68">尘等。</text></g>
<g transform="translate(776.8 545.55) scale(0.082 0.132)" fill="#00ff00" font-family="'Liberation Sans','Noto Sans CJK SC',sans-serif" font-weight="bold" font-size="100"><text x="0" y="88" letter-spacing="2.68">装配前应对零、部件的主要配合尺寸，特别是过</text></g>
<g transform="translate(776.8 563.5) scale(0.082 0.132)" fill="#00ff00" font-family="'Liberation Sans','Noto Sans CJK SC',sans-serif" font-weight="bold" font-size="100"><text x="0" y="88" letter-spacing="2.68">盈配合尺寸及相关精度进行复查。</text></g>
<line x1="858.5" y1="592.5" x2="1011.5" y2="592.5" stroke="#ffffff" stroke-width="1"/>
<line x1="858.5" y1="598.5" x2="1011.5" y2="598.5" stroke="#ffffff" stroke-width="1"/>
<line x1="858.5" y1="604.5" x2="1011.5" y2="604.5" stroke="#ffffff" stroke-width="1"/>
<line x1="858.5" y1="610.5" x2="1011.5" y2="610.5" stroke="#ffffff" stroke-width="1"/>
<line x1="858.5" y1="616.5" x2="1011.5" y2="616.5" stroke="#ffffff" stroke-width="1"/>
<line x1="858.5" y1="622.5" x2="1011.5" y2="622.5" stroke="#ffffff" stroke-width="1"/>
<line x1="858.5" y1="628.5" x2="1011.5" y2="628.5" stroke="#ffffff" stroke-width="1"/>
<line x1="858.5" y1="634.5" x2="1011.5" y2="634.5" stroke="#ffffff" stroke-width="1"/>
<line x1="858.5" y1="640.5" x2="1011.5" y2="640.5" stroke="#ffffff" stroke-width="1"/>
<line x1="858.5" y1="646.5" x2="1011.5" y2="646.5" stroke="#ffffff" stroke-width="1"/>
<line x1="858.5" y1="652.5" x2="1011.5" y2="652.5" stroke="#ffffff" stroke-width="1"/>
<line x1="858.5" y1="658.5" x2="1011.5" y2="658.5" stroke="#ffffff" stroke-width="1"/>
<line x1="858.5" y1="664.5" x2="1011.5" y2="664.5" stroke="#ffffff" stroke-width="1"/>
<line x1="858.5" y1="675.5" x2="1011.5" y2="675.5" stroke="#ffffff" stroke-width="1"/>
<line x1="858.5" y1="592.5" x2="858.5" y2="675.5" stroke="#ffffff" stroke-width="1"/>
<line x1="865.5" y1="592.5" x2="865.5" y2="675.5" stroke="#ffffff" stroke-width="1"/>
<line x1="899.5" y1="592.5" x2="899.5" y2="675.5" stroke="#ffffff" stroke-width="1"/>
<line x1="900.5" y1="592.5" x2="900.5" y2="675.5" stroke="#ffffff" stroke-width="1"/>
<line x1="937.5" y1="592.5" x2="937.5" y2="675.5" stroke="#ffffff" stroke-width="1"/>
<line x1="939.5" y1="592.5" x2="939.5" y2="675.5" stroke="#ffffff" stroke-width="1"/>
<line x1="943.5" y1="592.5" x2="943.5" y2="675.5" stroke="#ffffff" stroke-width="1"/>
<line x1="976.5" y1="592.5" x2="976.5" y2="675.5" stroke="#ffffff" stroke-width="1"/>
<line x1="984.5" y1="592.5" x2="984.5" y2="675.5" stroke="#ffffff" stroke-width="1"/>
<line x1="994.5" y1="592.5" x2="994.5" y2="675.5" stroke="#ffffff" stroke-width="1"/>
<line x1="1011.5" y1="592.5" x2="1011.5" y2="675.5" stroke="#ffffff" stroke-width="1"/>
<rect x="867.13" y="594" width="23.66" height="4" fill="#ffffff"/>
<rect x="901.4" y="594" width="19.58" height="4" fill="#ffffff"/>
<rect x="944.96" y="594" width="5.87" height="4" fill="#ffffff"/>
<rect x="860" y="594" width="1" height="4.5" fill="#ffffff"/>
<rect x="860" y="594" width="4" height="1" fill="#ffffff"/>
<rect x="863" y="594" width="1" height="4.5" fill="#ffffff"/>
<rect x="940.5" y="594" width="1" height="4" fill="#ffffff"/>
<rect x="867.13" y="600" width="23.66" height="4" fill="#ffffff"/>
<rect x="901.4" y="600" width="35.08" height="4" fill="#ffffff"/>
<rect x="944.96" y="600" width="30.35" height="4" fill="#ffffff"/>
<rect x="996.03" y="600" width="15.5" height="4" fill="#ffffff"/>
<rect x="860" y="600" width="1" height="4.5" fill="#ffffff"/>
<rect x="860" y="600" width="4" height="1" fill="#ffffff"/>
<rect x="863" y="600" width="1" height="4.5" fill="#ffffff"/>
<rect x="940.5" y="600" width="1" height="4" fill="#ffffff"/>
<rect x="867.13" y="606" width="23.66" height="4" fill="#ffffff"/>
<rect x="901.4" y="606" width="30.18" height="4" fill="#ffffff"/>
<rect x="944.96" y="606" width="30.35" height="4" fill="#ffffff"/>
<rect x="860" y="606" width="1" height="4.5" fill="#ffffff"/>
<rect x="860" y="606" width="4" height="1" fill="#ffffff"/>
<rect x="863" y="606" width="1" height="4.5" fill="#ffffff"/>
<rect x="940.5" y="606" width="1" height="4" fill="#ffffff"/>
<rect x="867.13" y="612" width="17.95" height="4" fill="#ffffff"/>
<rect x="901.4" y="612" width="23.66" height="4" fill="#ffffff"/>
<rect x="944.96" y="612" width="3.75" height="4" fill="#ffffff"/>
<rect x="860" y="612" width="1" height="4.5" fill="#ffffff"/>
<rect x="860" y="612" width="4" height="1" fill="#ffffff"/>
<rect x="863" y="612" width="1" height="4.5" fill="#ffffff"/>
<rect x="940.5" y="612" width="1" height="4" fill="#ffffff"/>
<rect x="867.13" y="618" width="20.07" height="4" fill="#ffffff"/>
<rect x="901.4" y="618" width="34.75" height="4" fill="#ffffff"/>
<rect x="996.03" y="618" width="15.5" height="4" fill="#ffffff"/>
<rect x="860" y="618" width="1" height="4.5" fill="#ffffff"/>
<rect x="860" y="618" width="4" height="1" fill="#ffffff"/>
<rect x="863" y="618" width="1" height="4.5" fill="#ffffff"/>
<rect x="940.5" y="618" width="1" height="4" fill="#ffffff"/>
<rect x="867.13" y="624" width="25.62" height="4" fill="#ffffff"/>
<rect x="901.4" y="624" width="20.39" height="4" fill="#ffffff"/>
<rect x="944.96" y="624" width="5.87" height="4" fill="#ffffff"/>
<rect x="996.03" y="624" width="15.5" height="4" fill="#ffffff"/>
<rect x="860" y="624" width="1" height="4.5" fill="#ffffff"/>
<rect x="860" y="624" width="4" height="1" fill="#ffffff"/>
<rect x="863" y="624" width="1" height="4.5" fill="#ffffff"/>
<rect x="940.5" y="624" width="1" height="4" fill="#ffffff"/>
<rect x="901.4" y="630" width="7.34" height="4" fill="#ffffff"/>
<rect x="944.96" y="630" width="7.02" height="4" fill="#ffffff"/>
<rect x="860" y="630" width="1" height="4.5" fill="#ffffff"/>
<rect x="860" y="630" width="4" height="1" fill="#ffffff"/>
<rect x="863" y="630" width="1" height="4.5" fill="#ffffff"/>
<rect x="940.5" y="630" width="1" height="4" fill="#ffffff"/>
<rect x="900.25" y="636" width="5.22" height="4" fill="#ffffff"/>
<rect x="944.96" y="636" width="2.94" height="4" fill="#ffffff"/>
<rect x="860" y="636" width="1" height="4.5" fill="#ffffff"/>
<rect x="860" y="636" width="4" height="1" fill="#ffffff"/>
<rect x="863" y="636" width="1" height="4.5" fill="#ffffff"/>
<rect x="940.5" y="636" width="1" height="4" fill="#ffffff"/>
<rect x="867.13" y="642" width="20.72" height="4" fill="#ffffff"/>
<rect x="900.25" y="642" width="33.77" height="4" fill="#ffffff"/>
<rect x="944.96" y="642" width="26.11" height="4" fill="#ffffff"/>
<rect x="860" y="642" width="1" height="4.5" fill="#ffffff"/>
<rect x="860" y="642" width="4" height="1" fill="#ffffff"/>
<rect x="863" y="642" width="1" height="4.5" fill="#ffffff"/>
<rect x="940.5" y="642" width="1" height="4" fill="#ffffff"/>
<rect x="867.13" y="648" width="23.66" height="4" fill="#ffffff"/>
<rect x="901.4" y="648" width="34.75" height="4" fill="#ffffff"/>
<rect x="944.96" y="648" width="5.87" height="4" fill="#ffffff"/>
<rect x="996.03" y="648" width="15.5" height="4" fill="#ffffff"/>
<rect x="860" y="648" width="1" height="4.5" fill="#ffffff"/>
<rect x="860" y="648" width="4" height="1" fill="#ffffff"/>
<rect x="863" y="648" width="1" height="4.5" fill="#ffffff"/>
<rect x="940.5" y="648" width="1" height="4" fill="#ffffff"/>
<rect x="867.13" y="654" width="23.66" height="4" fill="#ffffff"/>
<rect x="901.4" y="654" width="34.75" height="4" fill="#ffffff"/>
<rect x="944.96" y="654" width="5.87" height="4" fill="#ffffff"/>
<rect x="996.03" y="654" width="15.5" height="4" fill="#ffffff"/>
<rect x="860" y="654" width="1" height="4.5" fill="#ffffff"/>
<rect x="860" y="654" width="4" height="1" fill="#ffffff"/>
<rect x="863" y="654" width="1" height="4.5" fill="#ffffff"/>
<rect x="940.5" y="654" width="1" height="4" fill="#ffffff"/>
<rect x="901.4" y="660" width="7.34" height="4" fill="#ffffff"/>
<rect x="944.96" y="660" width="7.02" height="4" fill="#ffffff"/>
<rect x="860" y="660" width="1" height="4.5" fill="#ffffff"/>
<rect x="860" y="660" width="4" height="1" fill="#ffffff"/>
<rect x="863" y="660" width="1" height="4.5" fill="#ffffff"/>
<rect x="940.5" y="660" width="1" height="4" fill="#ffffff"/>
<rect x="867.13" y="647.86" width="23.66" height="10.58" fill="#ffffff"/>
<g transform="translate(859.3 666.2) scale(0.03 0.08)" fill="#ffffff" font-family="'Liberation Sans','Noto Sans CJK SC',sans-serif" font-size="100"><text x="0" y="88" letter-spacing="6.67">序号</text></g>
<g transform="translate(878 666.2) scale(0.046 0.08)" fill="#ffffff" font-family="'Liberation Sans','Noto Sans CJK SC',sans-serif" font-size="100"><text x="0" y="88">代号</text></g>
<g transform="translate(914 666.2) scale(0.044 0.08)" fill="#ffffff" font-family="'Liberation Sans','Noto Sans CJK SC',sans-serif" font-size="100"><text x="0" y="88">名称</text></g>
<g transform="translate(938.2 666.2) scale(0.045 0.08)" fill="#ffffff" font-family="'Liberation Sans','Noto Sans CJK SC',sans-serif" font-size="100"><text x="0" y="88">数</text></g>
<g transform="translate(955.6 666.2) scale(0.044 0.08)" fill="#ffffff" font-family="'Liberation Sans','Noto Sans CJK SC',sans-serif" font-size="100"><text x="0" y="88">材料</text></g>
<g transform="translate(999.2 666.2) scale(0.046 0.08)" fill="#ffffff" font-family="'Liberation Sans','Noto Sans CJK SC',sans-serif" font-size="100"><text x="0" y="88">备注</text></g>
<rect x="977" y="665.5" width="4" height="5" fill="#ffffff"/>
<rect x="985" y="665.5" width="1" height="4.5" fill="#ffffff"/>
<rect x="987" y="665.5" width="1" height="4.5" fill="#ffffff"/>
<rect x="982" y="671" width="5" height="4" fill="#ffffff"/>
<rect x="993" y="667" width="1" height="3" fill="#ffffff"/>
<line x1="858.5" y1="675.5" x2="926.5" y2="675.5" stroke="#ffffff" stroke-width="1"/>
<line x1="858.5" y1="681.5" x2="926.5" y2="681.5" stroke="#ffffff" stroke-width="1"/>
<line x1="858.5" y1="687.5" x2="926.5" y2="687.5" stroke="#ffffff" stroke-width="1"/>
<line x1="858.5" y1="693.5" x2="926.5" y2="693.5" stroke="#ffffff" stroke-width="1"/>
<line x1="858.5" y1="699.5" x2="926.5" y2="699.5" stroke="#ffffff" stroke-width="1"/>
<line x1="858.5" y1="705.5" x2="926.5" y2="705.5" stroke="#ffffff" stroke-width="1"/>
<line x1="858.5" y1="711.5" x2="926.5" y2="711.5" stroke="#ffffff" stroke-width="1"/>
<line x1="858.5" y1="717.5" x2="926.5" y2="717.5" stroke="#ffffff" stroke-width="1"/>
<line x1="858.5" y1="675.5" x2="858.5" y2="699.5" stroke="#ffffff" stroke-width="1"/>
<line x1="867.5" y1="675.5" x2="867.5" y2="699.5" stroke="#ffffff" stroke-width="1"/>
<line x1="875.5" y1="675.5" x2="875.5" y2="699.5" stroke="#ffffff" stroke-width="1"/>
<line x1="889.5" y1="675.5" x2="889.5" y2="699.5" stroke="#ffffff" stroke-width="1"/>
<line x1="903.5" y1="675.5" x2="903.5" y2="699.5" stroke="#ffffff" stroke-width="1"/>
<line x1="913.5" y1="675.5" x2="913.5" y2="699.5" stroke="#ffffff" stroke-width="1"/>
<line x1="926.5" y1="675.5" x2="926.5" y2="699.5" stroke="#ffffff" stroke-width="1"/>
<line x1="858.5" y1="699.5" x2="858.5" y2="723.5" stroke="#ffffff" stroke-width="1"/>
<line x1="869.5" y1="699.5" x2="869.5" y2="723.5" stroke="#ffffff" stroke-width="1"/>
<line x1="879.5" y1="699.5" x2="879.5" y2="723.5" stroke="#ffffff" stroke-width="1"/>
<line x1="892.5" y1="699.5" x2="892.5" y2="723.5" stroke="#ffffff" stroke-width="1"/>
<line x1="903.5" y1="699.5" x2="903.5" y2="723.5" stroke="#ffffff" stroke-width="1"/>
<line x1="913.5" y1="699.5" x2="913.5" y2="723.5" stroke="#ffffff" stroke-width="1"/>
<line x1="926.5" y1="699.5" x2="926.5" y2="723.5" stroke="#ffffff" stroke-width="1"/>
<rect x="860.12" y="694.5" width="5.87" height="4.5" fill="#00ff00"/>
<rect x="867.95" y="694.5" width="6.2" height="4.5" fill="#00ff00"/>
<rect x="879.04" y="694.5" width="6.04" height="4.5" fill="#00ff00"/>
<rect x="889.16" y="694.5" width="13.05" height="4.5" fill="#00ff00"/>
<rect x="905.15" y="694.5" width="6.04" height="4.5" fill="#00ff00"/>
<rect x="914.12" y="694.5" width="11.75" height="4.5" fill="#00ff00"/>
<rect x="861.09" y="700.8" width="6.04" height="4" fill="#00ff00"/>
<rect x="892.75" y="700.8" width="9.46" height="4" fill="#00ff00"/>
<rect x="861.09" y="713" width="6.04" height="4" fill="#00ff00"/>
<rect x="861.09" y="718.8" width="6.04" height="4.5" fill="#00ff00"/>
<rect x="894.87" y="718.8" width="6.04" height="4.5" fill="#00ff00"/>
<line x1="926.5" y1="675.5" x2="1011.5" y2="675.5" stroke="#ffffff" stroke-width="1"/>
<line x1="926.5" y1="699.5" x2="1011.5" y2="699.5" stroke="#ffffff" stroke-width="1"/>
<line x1="969.5" y1="675.5" x2="969.5" y2="723.5" stroke="#ffffff" stroke-width="1"/>
<line x1="970.5" y1="675.5" x2="970.5" y2="723.5" stroke="#ffffff" stroke-width="1"/>
<line x1="970.5" y1="690.5" x2="1011.5" y2="690.5" stroke="#ffffff" stroke-width="1"/>
<line x1="970.5" y1="708.5" x2="1011.5" y2="708.5" stroke="#ffffff" stroke-width="1"/>
<line x1="970.5" y1="715.5" x2="1011.5" y2="715.5" stroke="#ffffff" stroke-width="1"/>
<line x1="991.5" y1="699.5" x2="991.5" y2="715.5" stroke="#ffffff" stroke-width="1"/>
<line x1="1001.5" y1="699.5" x2="1001.5" y2="715.5" stroke="#ffffff" stroke-width="1"/>
<line x1="975" y1="708.5" x2="975" y2="715.5" stroke="#ffffff" stroke-width="1"/>
<line x1="980.5" y1="708.5" x2="980.5" y2="715.5" stroke="#ffffff" stroke-width="1"/>
<line x1="985.5" y1="708.5" x2="985.5" y2="715.5" stroke="#ffffff" stroke-width="1"/>
<rect x="974" y="702" width="12.24" height="5" fill="#00ff00"/>
<rect x="992.76" y="702" width="6.04" height="5" fill="#00ff00"/>
<rect x="1002.55" y="702" width="6.53" height="5" fill="#00ff00"/>
<rect x="1003.7" y="710" width="5.38" height="5" fill="#00ff00"/>
<rect x="972.04" y="718" width="3.92" height="5.5" fill="#00ff00"/>
<rect x="982.97" y="718" width="4.08" height="5.5" fill="#00ff00"/>
<rect x="993.91" y="718" width="4.24" height="5.5" fill="#00ff00"/>
<rect x="1005.82" y="718" width="3.26" height="5.5" fill="#00ff00"/>
</svg>

<div id="tb">
 <div class="w" style="left:0;width:68px"></div>
 <div class="vl" style="left:68px;background:#dfe4ee"></div>
 <div class="ar" style="left:57px"></div>
 <div class="sep" style="left:71px"></div>
 <div class="w" style="left:99px;width:98px"></div>
 <div class="vl" style="left:99px;background:#e4e7ee"></div>
 <div class="vl" style="left:197px;background:#dfe4ee"></div>
 <div class="t" style="left:102px">Standard</div>
 <div class="ar" style="left:186px"></div>
 <div class="vl" style="left:201px;background:#b8b8b8;height:20px"></div>
 <div class="vl" style="left:202px;background:#fff;height:20px"></div>
 <div class="vl" style="left:206px;background:#c4c4c4;height:19px"></div>
 <div class="vl" style="left:207px;background:#fbfbfb;height:19px"></div>
 <div class="vl" style="left:209px;background:#c4c4c4;height:19px"></div>
 <div class="vl" style="left:210px;background:#fbfbfb;height:19px"></div>
 <div class="vl" style="left:212px;background:#d0d0d0;height:19px"></div>
 <div class="w" style="left:216px;width:149px"></div>
 <div class="vl" style="left:216px;background:#e4e7ee"></div>
 <div class="vl" style="left:365px;background:#dfe4ee"></div>
 <div style="position:absolute;left:222px;top:3px;width:8px;height:8px;border:1px solid #111;background:#fff"></div>
 <div class="t" style="left:236px">ByLayer</div>
 <div class="ar" style="left:354px"></div>
 <div class="sep" style="left:368px"></div>
 <div class="w" style="left:373px;width:158px"></div>
 <div class="vl" style="left:373px;background:#e4e7ee"></div>
 <div class="vl" style="left:531px;background:#dfe4ee"></div>
 <div style="position:absolute;left:377px;top:8px;width:60px;height:1px;background:#000"></div>
 <div class="t" style="left:442px">ByLayer</div>
 <div class="ar" style="left:519px"></div>
 <div class="sep" style="left:534px"></div>
 <div class="w" style="left:539px;width:123px"></div>
 <div class="vl" style="left:539px;background:#e4e7ee"></div>
 <div class="vl" style="left:662px;background:#dfe4ee"></div>
 <div style="position:absolute;left:543px;top:7px;width:35px;height:3px;background:#000"></div>
 <div class="t" style="left:583px">ByLayer</div>
 <div class="ar" style="left:651px"></div>
 <div class="sep" style="left:665px"></div>
 <div class="w" style="left:770px;width:18px"></div>
 <div class="vl" style="left:669px;background:#dcdcdc;height:18px"></div>
 <div class="ar" style="left:776px;border-top-color:#a8a8a8"></div>
 <div class="vl" style="left:788px;background:#a8a8a8;height:19px"></div>
 <div class="vl" style="left:792px;background:#a0a0a0;height:20px"></div>
 <div class="ln"></div><div class="ln2"></div><div class="ln3"></div>
 <div style="position:absolute;left:669px;top:18px;width:124px;height:1px;background:#b4b4b4"></div>
 <div style="position:absolute;left:669px;top:20px;width:124px;height:1px;background:#f0f0f0"></div>
 <div style="position:absolute;left:793px;top:18px;width:249px;height:3px;background:#f0f0f0"></div>
 <div class="g"></div><div class="g2"></div>
 <svg style="position:absolute;left:77px;top:2px" width="18" height="15" viewBox="0 0 18 15">
  <rect x="1" y="2" width="14" height="12" fill="#4f7fc2"/>
  <rect x="1" y="2" width="14" height="3" fill="#7ea6dc"/>
  <rect x="2" y="6" width="3" height="2" fill="#eaf1fb"/><rect x="6" y="6" width="3" height="2" fill="#eaf1fb"/><rect x="10" y="6" width="4" height="2" fill="#eaf1fb"/>
  <rect x="2" y="10" width="3" height="2" fill="#eaf1fb"/><rect x="6" y="10" width="3" height="2" fill="#eaf1fb"/><rect x="10" y="10" width="4" height="2" fill="#eaf1fb"/>
  <path d="M4 10 L9 6 L11 8 Z" fill="#222"/>
  <path d="M9 6 L15 0 L17 1 L11 8 Z" fill="#d08a3c"/>
 </svg>
 <svg style="position:absolute;left:677px;top:1px" width="40" height="14" viewBox="0 0 40 14"><text x="1.5" y="11.6" font-family="'Liberation Sans','Noto Sans CJK SC',sans-serif" font-size="11.8" letter-spacing="0.2" fill="#5c5c5c">随颜色</text></svg>
</div>
<div id="bot"><i></i></div>

</body></html>
